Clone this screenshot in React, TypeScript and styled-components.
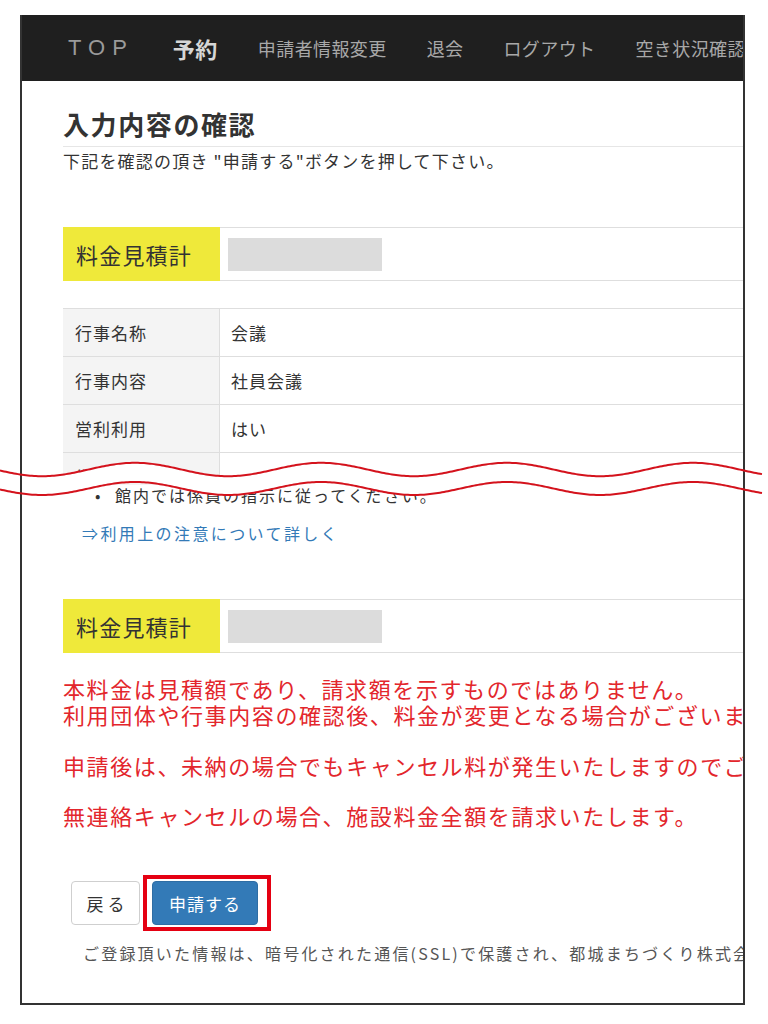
import React from "react";
import styled, { createGlobalStyle } from "styled-components";

const Global = createGlobalStyle`
  html, body { margin: 0; padding: 0; background: #fff; }
  body {
    font-family: "Noto Sans CJK JP", "Noto Sans", sans-serif;
    color: #333;
  }
`;

const Page = styled.div`
  position: relative;
  width: 768px;
  height: 1024px;
  padding-top: 15px;
  box-sizing: border-box;
  overflow: hidden;
`;

const Frame = styled.div`
  margin-left: 20px;
  width: 725px;
  height: 990px;
  box-sizing: border-box;
  border: 2px solid #333;
  border-top: none;
  overflow: hidden;
  display: flex;
  flex-direction: column;
`;

const Nav = styled.nav`
  flex-shrink: 0;
  height: 66px;
  background: #1f1f1f;
  display: flex;
  align-items: center;
  gap: 40px;
  padding-left: 46px;
  white-space: nowrap;
  width: 1100px;
`;

const Brand = styled.span`
  font-family: "Liberation Sans", "Noto Sans", sans-serif;
  font-size: 22px;
  letter-spacing: 7px;
  color: #9a9a9a;
  margin-right: -1px;
`;

const NavItem = styled.span<{ $active?: boolean }>`
  font-size: ${(p) => (p.$active ? "22px" : "18px")};
  font-weight: ${(p) => (p.$active ? 700 : 400)};
  color: ${(p) => (p.$active ? "#d6d6d6" : "#a8a8a8")};
  letter-spacing: ${(p) => (p.$active ? "0.5px" : "0.4px")};
`;

const Content = styled.div`
  flex-shrink: 0;
  width: 1100px;
  padding-left: 41px;
`;

const Title = styled.h1`
  margin: 28px 0 0;
  font-size: 26px;
  font-weight: 700;
  line-height: 30px;
  letter-spacing: 1.6px;
  padding-bottom: 7px;
  border-bottom: 1px solid #e6e6e6;
  color: #333;
`;

const Lead = styled.p`
  margin: 3px 0 0;
  font-size: 17px;
  line-height: 21px;
  letter-spacing: 1.2px;
  color: #333;
`;

const EstimateRow = styled.div<{ $top: number }>`
  margin-top: ${(p) => p.$top}px;
  height: 54px;
  box-sizing: border-box;
  border-top: 1px solid #dedede;
  border-bottom: 1px solid #dedede;
  display: flex;
  align-items: center;
`;

const EstimateLabel = styled.div`
  align-self: stretch;
  margin: -1px 0;
  width: 157px;
  box-sizing: border-box;
  padding-left: 13px;
  background: #efe93a;
  display: flex;
  align-items: center;
  font-size: 22px;
  letter-spacing: 1.2px;
  color: #333;
`;

const Placeholder = styled.div`
  margin-left: 8px;
  width: 154px;
  height: 33px;
  background: #dcdcdc;
`;

const Cut = styled.div`
  margin-top: 27px;
  height: 177px;
  overflow: hidden;
`;

const Row = styled.div`
  display: flex;
  height: 48px;
  box-sizing: border-box;
  border-top: 1px solid #dedede;
`;

const LabelCell = styled.div`
  width: 157px;
  box-sizing: border-box;
  padding-left: 12px;
  background: #f4f4f4;
  border-right: 1px solid #dedede;
  display: flex;
  align-items: center;
  font-size: 17px;
  letter-spacing: 1px;
`;

const ValueCell = styled.div`
  padding-left: 11px;
  display: flex;
  align-items: center;
  font-size: 17px;
  letter-spacing: 1px;
`;

const Notes = styled.ul`
  margin: 0;
  padding: 0 0 0 32px;
  list-style: none;
`;

const Note = styled.li`
  display: flex;
  font-size: 16px;
  line-height: 20px;
  letter-spacing: 2px;
  &::before {
    content: "•";
    width: 20px;
    flex-shrink: 0;
  }
`;

const MoreLink = styled.a`
  display: block;
  margin-top: 18px;
  padding-left: 19px;
  font-size: 16px;
  line-height: 20px;
  letter-spacing: 2.4px;
  color: #337ab7;
  text-decoration: none;
`;

const Warnings = styled.div`
  margin-top: 22px;
  color: #e3262c;
  font-size: 22px;
  line-height: 26px;
  letter-spacing: 1.6px;
  white-space: nowrap;
`;

const Warning = styled.p<{ $gap: number }>`
  margin: ${(p) => p.$gap}px 0 0;
`;

const Actions = styled.div`
  margin-top: 47px;
  height: 56px;
  display: flex;
  align-items: center;
  padding-left: 8px;
`;

const BackButton = styled.button`
  width: 69px;
  height: 44px;
  box-sizing: border-box;
  border: 1px solid #cfcfcf;
  border-radius: 4px;
  background: #fff;
  color: #333;
  font-family: inherit;
  font-size: 17px;
  letter-spacing: 4px;
  padding: 0 0 0 4px;
`;

const Highlight = styled.div`
  margin-left: 3px;
  border: 4px solid #e50012;
  padding: 2px 9px 2px 5px;
  display: flex;
`;

const SubmitButton = styled.button`
  width: 106px;
  height: 44px;
  border: 1px solid #2e6da4;
  border-radius: 4px;
  background: #337ab7;
  color: #fff;
  font-family: inherit;
  font-size: 17px;
  letter-spacing: 1px;
  padding: 0;
`;

const Footnote = styled.p`
  margin: 12px 0 0;
  padding-left: 20px;
  font-size: 16px;
  line-height: 20px;
  letter-spacing: 2.2px;
  color: #555;
  white-space: nowrap;
`;

const WaveSvg = styled.svg`
  position: absolute;
  left: 0;
  top: 450px;
  pointer-events: none;
`;

const PERIOD = 186;
const CREST = 135;

function wavePoints(center: number, amp: number, x0: number, x1: number) {
  const pts: [number, number][] = [];
  for (let x = x0; x <= x1; x += 2) {
    const y = center - amp * Math.cos((2 * Math.PI * (x - CREST)) / PERIOD);
    pts.push([x, y]);
  }
  return pts;
}

function toPath(pts: [number, number][]) {
  return pts.map((p, i) => `${i ? "L" : "M"}${p[0].toFixed(1)} ${p[1].toFixed(2)}`).join(" ");
}

const Wave: React.FC = () => {
  const upperFill = wavePoints(469.5, 6.7, 22, 742);
  const lowerFill = wavePoints(488.5, 6.5, 22, 742).reverse();
  const fill =
    toPath(upperFill) +
    " " +
    lowerFill.map((p) => `L${p[0].toFixed(1)} ${p[1].toFixed(2)}`).join(" ") +
    " Z";
  const upper = toPath(wavePoints(469.5, 6.7, 0, 762));
  const lower = toPath(wavePoints(488.5, 6.5, 0, 762));
  return (
    <WaveSvg width={768} height={60} viewBox="0 450 768 60">
      <path d={fill} fill="#fff" />
      <path d={upper} fill="none" stroke="#d4121c" strokeWidth={2} />
      <path d={lower} fill="none" stroke="#d4121c" strokeWidth={2} />
    </WaveSvg>
  );
};

const rows = [
  { label: "行事名称", value: "会議" },
  { label: "行事内容", value: "社員会議" },
  { label: "営利利用", value: "はい" },
  { label: "備考", value: "" },
];

export default function App() {
  return (
    <>
      <Global />
      <Page>
        <Frame>
          <Nav>
            <Brand>TOP</Brand>
            <NavItem $active>予約</NavItem>
            <NavItem>申請者情報変更</NavItem>
            <NavItem>退会</NavItem>
            <NavItem>ログアウト</NavItem>
            <NavItem>空き状況確認</NavItem>
          </Nav>
          <Content>
            <Title>入力内容の確認</Title>
            <Lead>下記を確認の頂き "申請する"ボタンを押して下さい。</Lead>

            <EstimateRow $top={56}>
              <EstimateLabel>料金見積計</EstimateLabel>
              <Placeholder />
            </EstimateRow>

            <Cut>
              {rows.map((r) => (
                <Row key={r.label}>
                  <LabelCell>{r.label}</LabelCell>
                  <ValueCell>{r.value}</ValueCell>
                </Row>
              ))}
            </Cut>

            <Notes>
              <Note>館内では係員の指示に従ってください。</Note>
            </Notes>
            <MoreLink href="#">⇒利用上の注意について詳しく</MoreLink>

            <EstimateRow $top={56}>
              <EstimateLabel>料金見積計</EstimateLabel>
              <Placeholder />
            </EstimateRow>

            <Warnings>
              <Warning $gap={0}>
                本料金は見積額であり、請求額を示すものではありません。
                <br />
                利用団体や行事内容の確認後、料金が変更となる場合がございます。
              </Warning>
              <Warning $gap={25}>
                申請後は、未納の場合でもキャンセル料が発生いたしますのでご注意ください。
              </Warning>
              <Warning $gap={24}>無連絡キャンセルの場合、施設料金全額を請求いたします。</Warning>
            </Warnings>

            <Actions>
              <BackButton>戻る</BackButton>
              <Highlight>
                <SubmitButton>申請する</SubmitButton>
              </Highlight>
            </Actions>

            <Footnote>
              ご登録頂いた情報は、暗号化された通信(SSL)で保護され、都城まちづくり株式会社が責任をもって管理いたします。
            </Footnote>
          </Content>
        </Frame>
        <Wave />
      </Page>
    </>
  );
}
